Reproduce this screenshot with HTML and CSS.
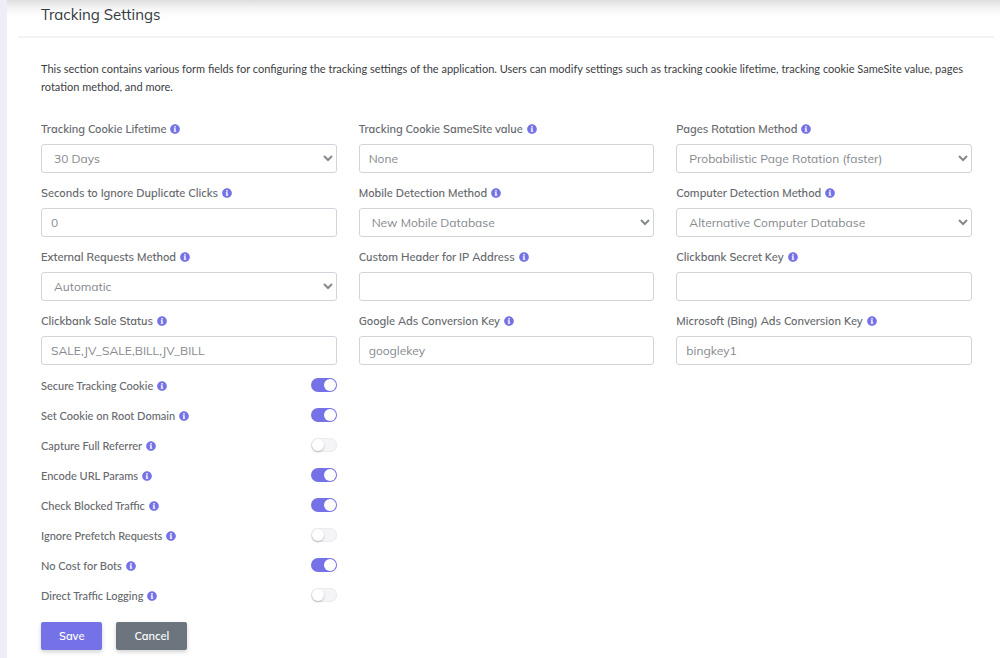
FILE: index.html
```html
<!DOCTYPE html>
<html lang="en">
<head>
  <meta charset="UTF-8">
  <meta name="viewport" content="width=device-width, initial-scale=1.0">
  <title>Tracking Settings</title>
  <link rel="stylesheet" href="styles.css">
</head>
<body>
  <!-- Info icon, reused next to every label -->
  <svg class="sprite" aria-hidden="true">
    <symbol id="info" viewBox="0 0 512 512">
      <path fill="currentColor" d="M256 8C119 8 8 119 8 256s111 248 248 248 248-111 248-248S393 8 256 8zm0 90a46 46 0 1 1 0 92 46 46 0 0 1 0-92zm64 286c0 7-5 12-12 12H204c-7 0-12-5-12-12v-32c0-7 5-12 12-12h16v-68h-16c-7 0-12-5-12-12v-32c0-7 5-12 12-12h76c7 0 12 5 12 12v112h16c7 0 12 5 12 12v32z"/>
    </symbol>
  </svg>

  <main class="card">
    <header class="card-header">
      <h1>Tracking Settings</h1>
    </header>

    <form class="card-body">
      <p class="intro">This section contains various form fields for configuring the tracking settings of the application. Users can modify settings such as tracking cookie lifetime, tracking cookie SameSite value, pages rotation method, and more.</p>

      <div class="fields">
        <div class="field">
          <label for="lifetime">Tracking Cookie Lifetime <svg class="info"><use href="#info"/></svg></label>
          <select id="lifetime"><option>30 Days</option></select>
        </div>
        <div class="field">
          <label for="samesite">Tracking Cookie SameSite value <svg class="info"><use href="#info"/></svg></label>
          <input type="text" id="samesite" value="None">
        </div>
        <div class="field">
          <label for="rotation">Pages Rotation Method <svg class="info"><use href="#info"/></svg></label>
          <select id="rotation"><option>Probabilistic Page Rotation (faster)</option></select>
        </div>
        <div class="field">
          <label for="duplicate">Seconds to Ignore Duplicate Clicks <svg class="info"><use href="#info"/></svg></label>
          <input type="text" id="duplicate" value="0">
        </div>
        <div class="field">
          <label for="mobile">Mobile Detection Method <svg class="info"><use href="#info"/></svg></label>
          <select id="mobile"><option>New Mobile Database</option></select>
        </div>
        <div class="field">
          <label for="computer">Computer Detection Method <svg class="info"><use href="#info"/></svg></label>
          <select id="computer"><option>Alternative Computer Database</option></select>
        </div>
        <div class="field">
          <label for="external">External Requests Method <svg class="info"><use href="#info"/></svg></label>
          <select id="external"><option>Automatic</option></select>
        </div>
        <div class="field">
          <label for="ipheader">Custom Header for IP Address <svg class="info"><use href="#info"/></svg></label>
          <input type="text" id="ipheader">
        </div>
        <div class="field">
          <label for="cbsecret">Clickbank Secret Key <svg class="info"><use href="#info"/></svg></label>
          <input type="text" id="cbsecret">
        </div>
        <div class="field">
          <label for="cbstatus">Clickbank Sale Status <svg class="info"><use href="#info"/></svg></label>
          <input type="text" id="cbstatus" value="SALE,JV_SALE,BILL,JV_BILL">
        </div>
        <div class="field">
          <label for="google">Google Ads Conversion Key <svg class="info"><use href="#info"/></svg></label>
          <input type="text" id="google" value="googlekey">
        </div>
        <div class="field">
          <label for="bing">Microsoft (Bing) Ads Conversion Key <svg class="info"><use href="#info"/></svg></label>
          <input type="text" id="bing" value="bingkey1">
        </div>

        <div class="switches">
          <div class="switch-row">
            <label for="secure">Secure Tracking Cookie <svg class="info"><use href="#info"/></svg></label>
            <input type="checkbox" class="switch" id="secure" checked>
          </div>
          <div class="switch-row">
            <label for="root">Set Cookie on Root Domain <svg class="info"><use href="#info"/></svg></label>
            <input type="checkbox" class="switch" id="root" checked>
          </div>
          <div class="switch-row">
            <label for="referrer">Capture Full Referrer <svg class="info"><use href="#info"/></svg></label>
            <input type="checkbox" class="switch" id="referrer">
          </div>
          <div class="switch-row">
            <label for="encode">Encode URL Params <svg class="info"><use href="#info"/></svg></label>
            <input type="checkbox" class="switch" id="encode" checked>
          </div>
          <div class="switch-row">
            <label for="blocked">Check Blocked Traffic <svg class="info"><use href="#info"/></svg></label>
            <input type="checkbox" class="switch" id="blocked" checked>
          </div>
          <div class="switch-row">
            <label for="prefetch">Ignore Prefetch Requests <svg class="info"><use href="#info"/></svg></label>
            <input type="checkbox" class="switch" id="prefetch">
          </div>
          <div class="switch-row">
            <label for="bots">No Cost for Bots <svg class="info"><use href="#info"/></svg></label>
            <input type="checkbox" class="switch" id="bots" checked>
          </div>
          <div class="switch-row">
            <label for="direct">Direct Traffic Logging <svg class="info"><use href="#info"/></svg></label>
            <input type="checkbox" class="switch" id="direct">
          </div>
        </div>
      </div>

      <div class="actions">
        <button type="submit" class="btn btn-primary">Save</button>
        <button type="button" class="btn btn-secondary">Cancel</button>
      </div>
    </form>
  </main>
</body>
</html>
```

FILE: styles.css
```css
* {
  box-sizing: border-box;
}
body {
  margin: 0;
  min-height: 100vh;
  padding: 0 6px 0 11px;
  border-left: 7px solid #efeef6;
  /* shadow of the top bar over the white page */
  background: linear-gradient(#dedede, #f4f4f4 8px, #fff 17px) no-repeat #fff;
  font-family: Mulish, Lato, sans-serif;
  font-size: 11px;
  color: #3c4043;
}
.sprite {
  display: none;
}
.card-header {
  padding: 5px 23px 11px;
  border-bottom: 2px solid #f3f3f4;
}
h1 {
  margin: 0;
  font-size: 15px;
  line-height: 20px;
  font-weight: 400;
  color: #343a40;
}
.card-body {
  padding: 22px 22px 7px 23px;
}
.intro {
  margin: 0 0 23px;
  font-family: Lato, sans-serif;
  line-height: 18px;
}
.fields {
  display: grid;
  grid-template-columns: repeat(3, 1fr);
  gap: 10px 22px;
}
.field label {
  display: block;
  margin-bottom: 5px;
  line-height: 20px;
  font-weight: 600;
}
label {
  color: #66696d;
}
.info {
  width: 10px;
  height: 10px;
  margin-left: 1px;
  vertical-align: -1px;
  color: #7571e6;
}
.field input,
.field select {
  display: block;
  width: 100%;
  height: 29px;
  padding: 0 9px;
  border: 1px solid #d2d5d7;
  border-radius: 3px;
  background-color: #fff;
  font-family: inherit;
  font-size: 12px;
  color: #85898d;
}
.field select {
  padding: 0 0 0 8px;
}
.switch-row {
  display: flex;
  justify-content: space-between;
  align-items: center;
  height: 30px;
  font-family: Lato, sans-serif;
  font-weight: 500;
}
.switches {
  margin-top: -5px;
}
.switch {
  appearance: none;
  width: 26px;
  height: 14px;
  margin: 0;
  border-radius: 7px;
  background: #f5f5f8;
  box-shadow: inset 0 0 0 1px #ececef;
  cursor: pointer;
}
.switch::before {
  content: "";
  display: block;
  width: 12px;
  height: 12px;
  margin: 1px;
  border-radius: 50%;
  background: #fff;
  box-shadow: 0 1px 2px rgba(0, 0, 0, 0.25);
}
.switch:checked {
  background: #7571e6;
  box-shadow: none;
}
.switch:checked::before {
  margin-left: 13px;
  box-shadow: none;
}
.actions {
  display: flex;
  gap: 14px;
  margin-top: 12px;
}
.btn {
  height: 28px;
  padding: 0 18px;
  border: none;
  border-radius: 2px;
  font-family: inherit;
  font-size: 11px;
  font-weight: 600;
  color: #fff;
  box-shadow: 0 2px 4px rgba(0, 0, 0, 0.18);
  cursor: pointer;
}
.btn-primary {
  background: #7571e6;
}
.btn-secondary {
  background: #6c757d;
}
```
